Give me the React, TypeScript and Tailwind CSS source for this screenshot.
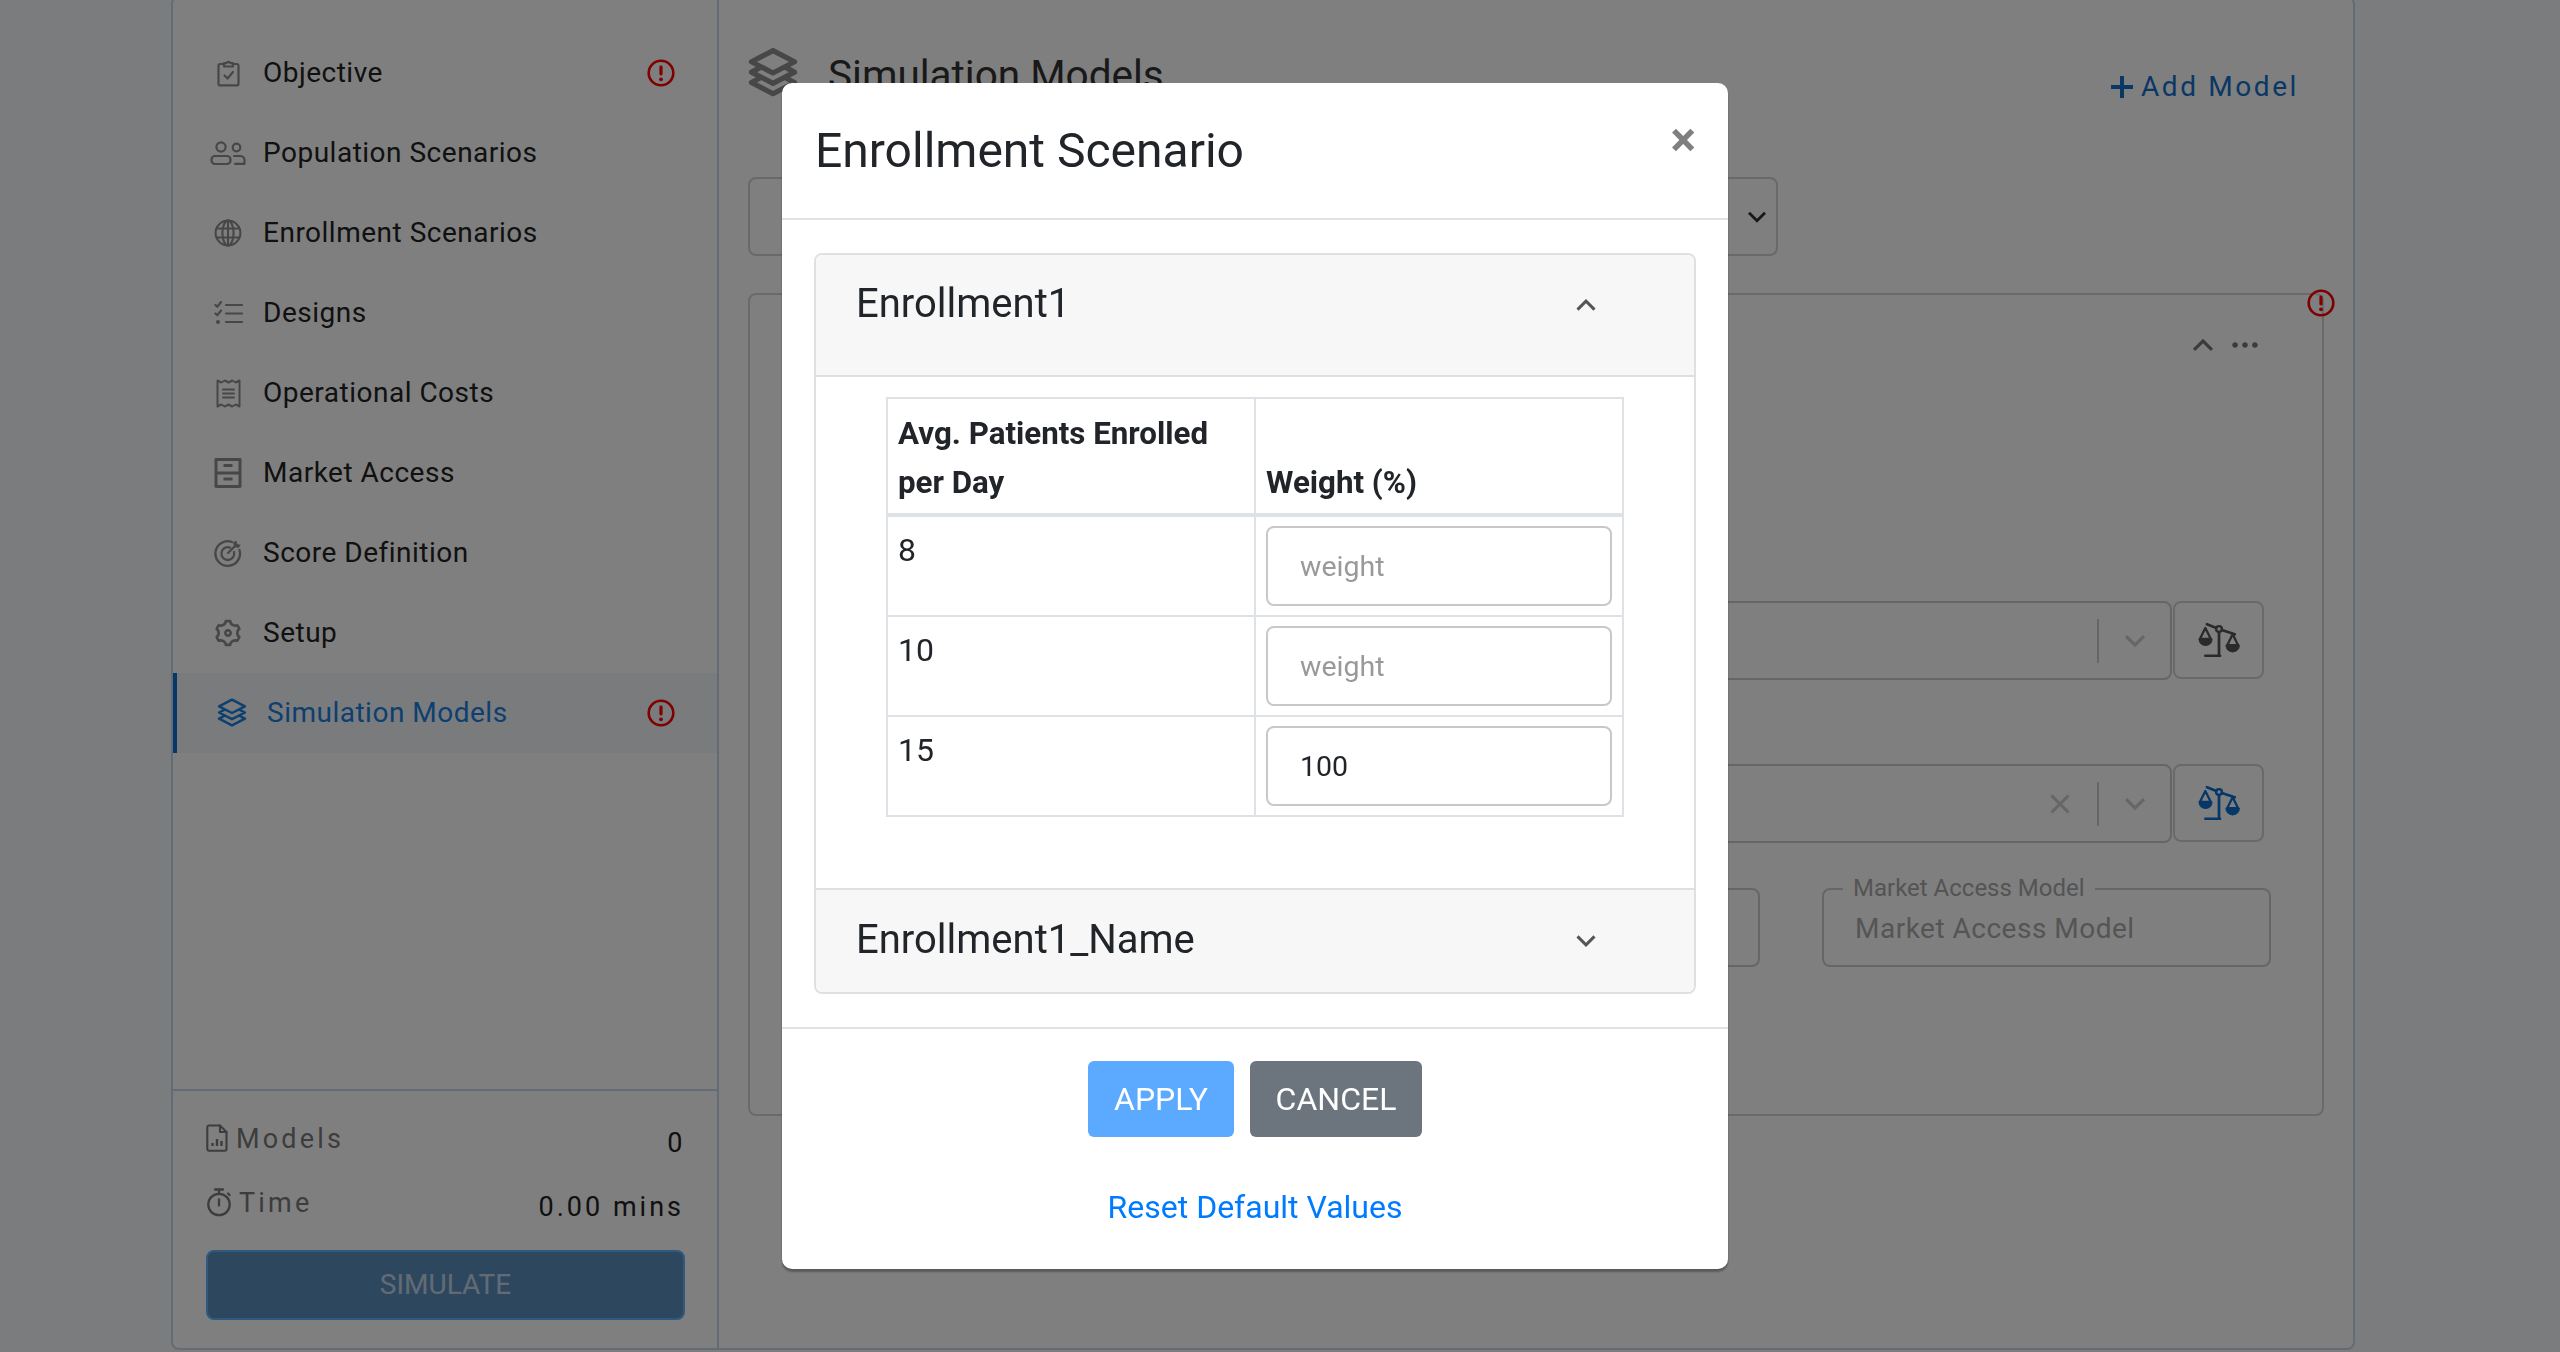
import React from "react";
import { RiArchiveDrawerLine, RiSettings3Line, RiArrowDownSLine, RiArrowUpSLine, RiMoreFill, RiCloseFill } from "react-icons/ri";

type P = { className?: string };
const base = { fill: "none", stroke: "currentColor", strokeLinecap: "round" as const, strokeLinejoin: "round" as const };

function Clipboard() {
  return (
    <svg width="23" height="28" viewBox="0 0 23 28" {...base} strokeWidth="2.2">
      <path d="M7 5H3.2A1.7 1.7 0 0 0 1.5 6.7v18a1.7 1.7 0 0 0 1.7 1.7h16.6a1.7 1.7 0 0 0 1.7-1.7v-18A1.7 1.7 0 0 0 19.8 5H16" />
      <path d="M7 7.5V4.2h2.6a2 2 0 0 1 3.8 0H16v3.3z" />
      <path d="M7.5 16.5l3 3 5.5-6.5" />
    </svg>
  );
}
function Users() {
  return (
    <svg width="36" height="24" viewBox="0 0 36 24" {...base} strokeWidth="2.2">
      <circle cx="11" cy="6" r="4.6" />
      <circle cx="26.5" cy="6.5" r="3.8" />
      <rect x="1.5" y="15" width="19" height="8" rx="3.5" />
      <path d="M24 15h6a4.5 4 0 0 1 4.5 4v3.8H25" />
    </svg>
  );
}
function Globe() {
  return (
    <svg width="28" height="28" viewBox="0 0 28 28" {...base} strokeWidth="2.1">
      <circle cx="14" cy="14" r="12.4" />
      <ellipse cx="14" cy="14" rx="5.6" ry="12.4" />
      <path d="M14 1.6v24.8M2.8 9.5h22.4M2.8 18.5h22.4" />
    </svg>
  );
}
function ListChecks() {
  return (
    <svg width="29" height="24" viewBox="0 0 29 24" {...base} strokeWidth="2.2">
      <path d="M1.5 4l1.8 1.8L7 1M1.5 12.5l1.8 1.8L7 9.5" />
      <circle cx="4" cy="21" r="2" fill="currentColor" stroke="none" />
      <path d="M12 4h16M12 12.5h16M12 21h16" />
    </svg>
  );
}
function Receipt() {
  return (
    <svg width="25" height="29" viewBox="0 0 25 29" {...base} strokeWidth="2">
      <path d="M1.5 1.5l3.7 2 3.6-2 3.7 2 3.7-2 3.6 2 3.7-2v26l-3.7-2-3.6 2-3.7-2-3.7 2-3.6-2-3.7 2z" />
      <path d="M7 10.5h11M7 14.5h11M7 18.5h11" />
    </svg>
  );
}
function Target() {
  return (
    <svg width="28" height="28" viewBox="0 0 28 28" {...base} strokeWidth="2.3">
      <path d="M18 3A12.3 12.3 0 1 0 25.5 11" />
      <path d="M16 8.6A6.4 6.4 0 1 0 20 13" />
      <path d="M14 14l7-7" />
      <path d="M19 3.5l3.2-2 1 3.4 3.4 1-2 3.2-3.4-.8-1.2-1.4z" fill="currentColor" stroke="none" />
    </svg>
  );
}
function Stack({ size = 30, w = 2.4 }: { size?: number; w?: number }) {
  return (
    <svg width={size} height={size} viewBox="0 0 29 29" {...base} strokeWidth={w}>
      <path d="M14.5 1.5L27 8 14.5 14.5 2 8z" />
      <path d="M7 11.4L2 14l12.5 6.5L27 14l-5-2.6" />
      <path d="M7 17.4L2 20l12.5 6.5L27 20l-5-2.6" />
    </svg>
  );
}
function FileChart() {
  return (
    <svg width="22" height="28" viewBox="0 0 22 28" {...base} strokeWidth="2.1">
      <path d="M3 1.5h11l6.5 6.5v17a1.7 1.7 0 0 1-1.7 1.7H3A1.7 1.7 0 0 1 1.3 25V3.2A1.7 1.7 0 0 1 3 1.5z" />
      <path d="M14 1.5V8h6.5" />
      <path d="M6.5 22v-3M11 22v-7M15.5 22v-5" strokeWidth="2.4" strokeLinecap="butt" />
    </svg>
  );
}
function Timer() {
  return (
    <svg width="26" height="29" viewBox="0 0 26 29" {...base} strokeWidth="2.3">
      <circle cx="13" cy="16.5" r="10.7" />
      <path d="M9 1.5h8M13 1.5v4.5M13 11.5v6M22 5.5l1.5 1.5" />
    </svg>
  );
}
function Err({ className = "" }: P) {
  return (
    <svg width="28" height="28" viewBox="0 0 28 28" className={`text-[#ff0000] ${className}`}>
      <circle cx="14" cy="14" r="12.3" fill="none" stroke="currentColor" strokeWidth="2.6" />
      <rect x="12.4" y="6.5" width="3.2" height="10" rx="1.4" fill="currentColor" />
      <circle cx="14" cy="20.3" r="1.9" fill="currentColor" />
    </svg>
  );
}
function ScaleIcon({ className = "" }: P) {
  return (
    <svg width="42" height="36" viewBox="0 0 40 33" className={className} {...base} strokeWidth="2.6">
      <circle cx="20" cy="6" r="2.8" strokeWidth="2.2" />
      <path d="M8.5 1.5L17.5 5M22.7 7L35 11M20 9v22M7 31.5h14" />
      <path d="M7 5l-5.2 10.5h10.4zM33 11l-5.2 10.5h10.4z" strokeWidth="2.2" />
      <path d="M1 15.5h12.4a6.2 6.2 0 0 1-12.4 0zM26.6 21.5h12.8a6.4 6.4 0 0 1-12.8 0z" fill="currentColor" strokeWidth="1" />
    </svg>
  );
}

const items: [string, React.ReactNode, boolean][] = [
  ["Objective", <Clipboard />, true],
  ["Population Scenarios", <Users />, false],
  ["Enrollment Scenarios", <Globe />, false],
  ["Designs", <ListChecks />, false],
  ["Operational Costs", <Receipt />, false],
  ["Market Access", <RiArchiveDrawerLine size={36} />, false],
  ["Score Definition", <Target />, false],
  ["Setup", <RiSettings3Line size={32} />, false],
];

function Scale({ className = "" }: P) {
  return (
    <button className="w-[91px] h-[78px] ml-[1px] rounded-[8px] border-2 border-[#ced4da] flex items-center justify-center bg-white shrink-0">
      <ScaleIcon className={className} />
    </button>
  );
}

function Sidebar() {
  return (
    <aside className="w-[546px] shrink-0 border-r-2 border-[#c6d6ea] flex flex-col pt-[35px]">
      <nav className="flex-1">
        {items.map(([label, icon, err]) => (
          <div key={label} className="h-[80px] flex items-center pl-[32px] pr-[42px] text-[#222222]">
            <span className="w-[46px] shrink-0 flex justify-center mr-[12px] text-[#8e8e8e]">{icon}</span>
            <span className="flex-1 text-[28px] tracking-[0.5px]">{label}</span>
            {err && <Err />}
          </div>
        ))}
        <div className="h-[80px] flex items-center border-l-4 border-[#0a6ed1] bg-[#f4f6fb] pl-[39px] pr-[42px] text-[#1a7fe0]">
          <span className="w-[32px] shrink-0 flex justify-center mr-[19px]">
            <Stack />
          </span>
          <span className="flex-1 text-[28px] tracking-[0.5px]">Simulation Models</span>
          <Err />
        </div>
      </nav>
      <div className="border-t-2 border-[#c6d6ea] pt-[33px] pb-[28px] px-[33px]">
        <div className="flex justify-between h-[64px]">
          <div className="flex items-start text-[#7a7a7a] text-[27px] tracking-[3.2px] leading-[30px]">
            <FileChart />
            <span className="ml-[8px]">Models</span>
          </div>
          <span className="text-[27px] tracking-[1.5px] text-[#222222] leading-[30px] mt-[4px]">0</span>
        </div>
        <div className="flex justify-between h-[62px]">
          <div className="flex items-start text-[#7a7a7a] text-[27px] tracking-[3.2px] leading-[30px]">
            <Timer />
            <span className="ml-[7px]">Time</span>
          </div>
          <span className="text-[27px] tracking-[3px] text-[#222222] leading-[30px] mt-[4px]">0.00 mins</span>
        </div>
        <button className="w-[479px] h-[70px] rounded-[8px] border-2 border-[#62b3ff] bg-[#5a8ebe] text-[#ffffff]/65 text-[28px]">
          SIMULATE
        </button>
      </div>
    </aside>
  );
}

function Main() {
  return (
    <main className="flex-1 relative pl-[29px] pr-[30px] pt-[52px] min-w-0">
      <div className="flex items-start justify-between h-[127px]">
        <div className="flex items-start">
          <span className="-mt-[2px]">
            <span className="block text-[#8e8e8e]"><Stack size={50} w={3} /></span>
          </span>
          <span className="ml-[30px] mt-[1px] text-[40.5px] text-[#333333] leading-[48px]">Simulation Models</span>
        </div>
        <div className="flex items-center text-[#1470c8] text-[28px] tracking-[2.6px] mt-[16px] mr-[24px]">
          <svg width="22" height="22" viewBox="0 0 22 22" className="mr-[8px]" fill="none" stroke="currentColor" strokeWidth="4">
            <path d="M11 0v22M0 11h22" />
          </svg>
          <span>Add Model</span>
        </div>
      </div>
      <div className="w-[1030px] h-[79px] rounded-[8px] border-2 border-[#ced4da] flex items-center justify-end pr-[2px]">
        <RiArrowDownSLine size={34} className="text-[#333333]" />
      </div>
      <section className="relative mt-[37px] w-[1576px] h-[823px] rounded-[8px] border-2 border-[#d4d4d4]">
        <Err className="absolute -top-[6px] -right-[13px]" />
        <div className="flex items-center justify-end gap-[6px] pr-[60px] pt-[10px] h-[90px] text-[#777777]">
          <RiArrowUpSLine size={38} />
          <RiMoreFill size={34} />
        </div>
        <div className="flex justify-end pr-[58px] mt-[216px]">
          <div className="w-[700px] h-[79px] rounded-[8px] border-2 border-[#cccccc] flex items-center justify-end pr-[16px]">
            <span className="w-[2px] h-[44px] bg-[#cccccc] mr-[17px]" />
            <RiArrowDownSLine size={38} className="text-[#cccccc]" />
          </div>
          <Scale className="text-[#555555]" />
        </div>
        <div className="flex justify-end pr-[58px] mt-[84px]">
          <div className="w-[700px] h-[79px] rounded-[8px] border-2 border-[#cccccc] flex items-center justify-end pr-[16px]">
            <RiCloseFill size={36} className="text-[#cccccc] mr-[19px]" />
            <span className="w-[2px] h-[44px] bg-[#cccccc] mr-[17px]" />
            <RiArrowDownSLine size={38} className="text-[#cccccc]" />
          </div>
          <Scale className="text-[#0a6ed1]" />
        </div>
        <div className="flex justify-end gap-[62px] pr-[51px] mt-[45px]">
          <div className="w-[100px] h-[79px] rounded-[8px] border-2 border-[#cccccc]" />
          <div className="relative w-[449px] h-[79px] rounded-[8px] border-2 border-[#cccccc] flex items-center pl-[31px] pt-[2px]">
            <span className="absolute -top-[15px] left-[19px] px-[10px] bg-white text-[24px] leading-[26px] text-[#a8a8a8]">Market Access Model</span>
            <span className="text-[28px] text-[#aaaaaa] leading-[36px] tracking-[0.5px]">Market Access Model</span>
          </div>
        </div>
      </section>
    </main>
  );
}

function Row({ n, value }: { n: string; value?: string }) {
  return (
    <tr className="h-[100px]">
      <td className="border-2 border-[#dee2e6] px-[10px] py-[10px] align-top leading-[46px]">{n}</td>
      <td className="border-2 border-[#dee2e6] px-[10px] py-[9px] align-top">
        <input
          readOnly
          placeholder="weight"
          defaultValue={value}
          className="block w-full h-[80px] rounded-[8px] border-2 border-[#c8c8c8] pl-[32px] text-[28.5px] outline-none placeholder:text-[#999999]"
        />
      </td>
    </tr>
  );
}

function Modal() {
  return (
    <div className="fixed inset-0 bg-black/50">
      <div className="w-[946px] h-[1186px] mt-[83px] ml-[782px] bg-white rounded-[10px] shadow-[0_3px_2px_rgba(0,0,0,0.3)] text-[#212529] text-[28px] flex flex-col">
        <header className="h-[137px] shrink-0 border-b-2 border-[#dee2e6] flex items-start justify-between pl-[33px] pr-[32px]">
          <h2 className="text-[48px] leading-[56px] mt-[40px]">Enrollment Scenario</h2>
          <span className="text-[#808080] text-[48px] leading-[48px] font-bold mt-[33px]">×</span>
        </header>
        <div className="h-[807px] shrink-0 px-[32px] pt-[33px]">
          <div className="h-[741px] rounded-[8px] border-2 border-[#e0e0e0] overflow-hidden">
            <div className="h-[122px] bg-[#f7f7f7] border-b-2 border-[#dfdfdf] flex items-start justify-between pl-[40px] pr-[90px] pt-[25px]">
              <span className="text-[40px] leading-[47px]">Enrollment1</span>
              <RiArrowUpSLine size={36} className="text-[#555555] mt-[7px]" />
            </div>
            <div className="h-[511px] pt-[20px] pl-[70px]">
              <table className="w-[738px] border-collapse table-fixed text-[32px]">
                <thead>
                  <tr>
                    <th className="border-2 border-b-4 border-[#dee2e6] px-[10px] pt-[10px] pb-[6px] align-bottom text-left font-bold text-[31.3px] leading-[49px]">
                      Avg. Patients Enrolled per Day
                    </th>
                    <th className="border-2 border-b-4 border-[#dee2e6] px-[10px] pt-[10px] pb-[6px] align-bottom text-left font-bold text-[31.3px] leading-[49px]">
                      Weight (%)
                    </th>
                  </tr>
                </thead>
                <tbody>
                  <Row n="8" />
                  <Row n="10" />
                  <Row n="15" value="100" />
                </tbody>
              </table>
            </div>
            <div className="h-[105px] bg-[#f7f7f7] border-t-2 border-[#dfdfdf] flex items-start justify-between pl-[40px] pr-[90px] pt-[26px]">
              <span className="text-[40px] leading-[47px]">Enrollment1_Name</span>
              <RiArrowDownSLine size={36} className="text-[#555555] mt-[7px]" />
            </div>
          </div>
        </div>
        <footer className="flex-1 border-t-2 border-[#dee2e6] flex flex-col items-center pt-[32px]">
          <div className="flex gap-[16px]">
            <button className="w-[146px] h-[76px] rounded-[6px] bg-[#5baaff] text-white text-[32px]">APPLY</button>
            <button className="w-[172px] h-[76px] rounded-[6px] bg-[#6c757d] text-white text-[32px]">CANCEL</button>
          </div>
          <a className="mt-[48px] text-[#007bff] text-[32px] leading-[44px]">Reset Default Values</a>
        </footer>
      </div>
    </div>
  );
}

export default function App() {
  return (
    <div className="h-[1352px] overflow-hidden bg-[#f6f8fd] font-['Roboto',sans-serif] relative">
      <div className="ml-[171px] w-[2184px] h-[1354px] -mt-[4px] flex bg-white rounded-[8px] border-2 border-[#c6d6ea]">
        <Sidebar />
        <Main />
      </div>
      <Modal />
    </div>
  );
}
